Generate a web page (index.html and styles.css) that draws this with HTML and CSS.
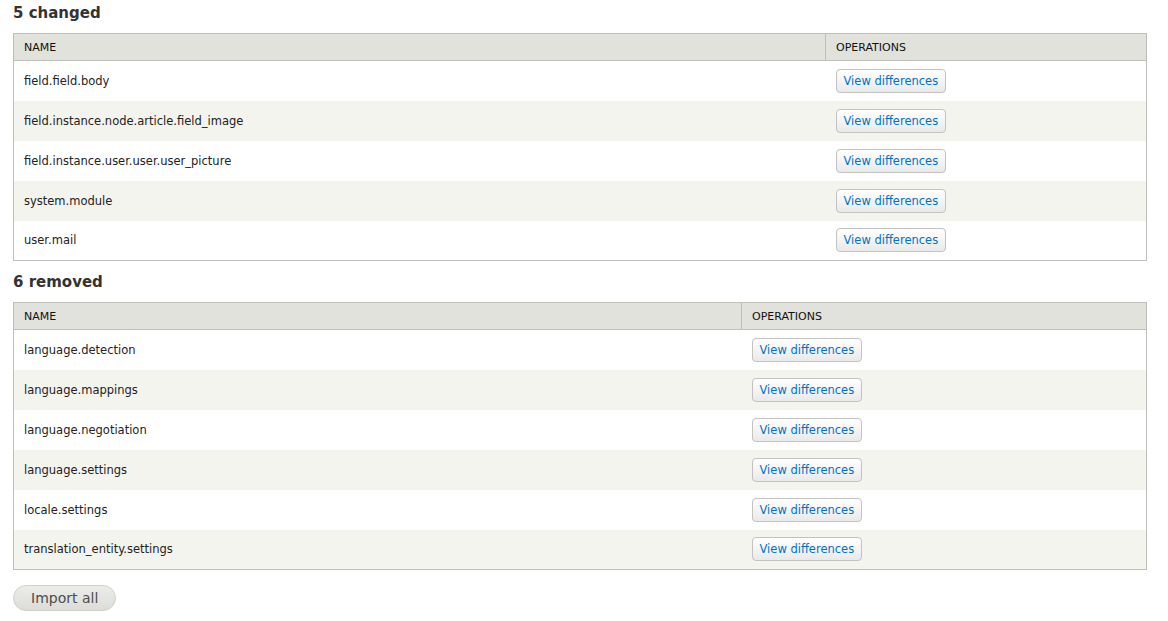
FILE: index.html
```html
<!DOCTYPE html>
<html lang="en">
<head>
    <meta charset="UTF-8">
    <title>Configuration synchronization</title>
    <link rel="stylesheet" href="styles.css">
</head>
<body>
    <h2>5 changed</h2>
    <table class="config-table changed">
        <thead>
            <tr>
                <th class="col-name">Name</th>
                <th>Operations</th>
            </tr>
        </thead>
        <tbody>
            <tr><td>field.field.body</td><td><a class="button" href="#">View differences</a></td></tr>
            <tr><td>field.instance.node.article.field_image</td><td><a class="button" href="#">View differences</a></td></tr>
            <tr><td>field.instance.user.user.user_picture</td><td><a class="button" href="#">View differences</a></td></tr>
            <tr><td>system.module</td><td><a class="button" href="#">View differences</a></td></tr>
            <tr><td>user.mail</td><td><a class="button" href="#">View differences</a></td></tr>
        </tbody>
    </table>

    <h2>6 removed</h2>
    <table class="config-table removed">
        <thead>
            <tr>
                <th class="col-name">Name</th>
                <th>Operations</th>
            </tr>
        </thead>
        <tbody>
            <tr><td>language.detection</td><td><a class="button" href="#">View differences</a></td></tr>
            <tr><td>language.mappings</td><td><a class="button" href="#">View differences</a></td></tr>
            <tr><td>language.negotiation</td><td><a class="button" href="#">View differences</a></td></tr>
            <tr><td>language.settings</td><td><a class="button" href="#">View differences</a></td></tr>
            <tr><td>locale.settings</td><td><a class="button" href="#">View differences</a></td></tr>
            <tr><td>translation_entity.settings</td><td><a class="button" href="#">View differences</a></td></tr>
        </tbody>
    </table>

    <div class="form-actions">
        <button type="submit" class="button-import">Import all</button>
    </div>
</body>
</html>
```

FILE: styles.css
```css
body {
    font-family: "DejaVu Sans", Verdana, sans-serif;
    margin: 0;
    padding: 0 21px 0 13px;
    background-color: white;
    color: #333;
}

h2 {
    font-size: 15px;
    line-height: 20px;
    font-weight: bold;
    color: #333;
    margin: 11px 0 10px;
}

h2:first-child {
    margin-top: 3px;
}

.config-table {
    width: 100%;
    border-collapse: collapse;
    border: 1px solid #bebfb9;
    font-size: 11.5px;
    color: #222;
}

.changed .col-name {
    width: 791px;
}

.removed .col-name {
    width: 707px;
}

.config-table th {
    background-color: #e1e2dc;
    border-bottom: 1px solid #bebfb9;
    border-left: 1px solid #bebfb9;
    text-align: left;
    text-transform: uppercase;
    font-weight: normal;
    font-size: 11px;
    color: #111;
    height: 26px;
    padding: 0 10px;
}

.config-table th:first-child {
    border-left: none;
}

.config-table td {
    height: 40px;
    padding: 0 10px;
    box-sizing: border-box;
}

.config-table tbody tr:nth-child(even) {
    background-color: #f3f4ee;
}

.button {
    display: inline-block;
    padding: 0 7px;
    height: 22px;
    line-height: 22px;
    border: 1px solid #c2c2c2;
    border-radius: 4px;
    background: linear-gradient(to bottom, #ffffff, #e9e9e9);
    color: #0074bd;
    text-decoration: none;
    font-size: 11.5px;
}

.form-actions {
    padding: 15px 0;
}

.button-import {
    font-family: inherit;
    font-size: 14px;
    color: #4d4d4d;
    height: 26px;
    padding: 0 17px;
    border: 1px solid #cfcfcb;
    border-radius: 13px;
    background: linear-gradient(to bottom, #ececea, #dcdcd8);
}
```
